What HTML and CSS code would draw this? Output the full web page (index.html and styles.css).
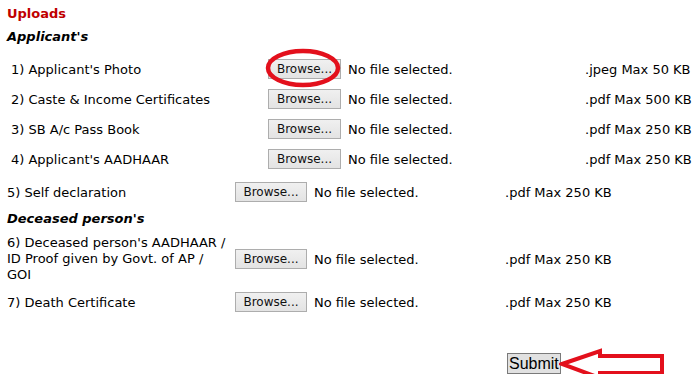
FILE: index.html
```html
<!DOCTYPE html>
<html>
<head>
<meta charset="utf-8">
<link rel="stylesheet" href="styles.css">
</head>
<body>
<div class="page">
  <div class="title">Uploads</div>
  <div class="section">Applicant's</div>
  <div class="group group-a">
    <div class="row">
      <div class="label">1) Applicant's Photo</div>
      <div class="file"><span class="btn-wrap"><span class="btn">Browse...</span><svg class="ring" viewBox="0 0 76 40" width="76" height="40"><ellipse cx="38" cy="20" rx="35" ry="17" fill="none" stroke="#e3101c" stroke-width="4.5"/></svg></span><span class="status">No file selected.</span></div>
      <div class="size">.jpeg Max 50 KB</div>
    </div>
    <div class="row">
      <div class="label">2) Caste &amp; Income Certificates</div>
      <div class="file"><span class="btn">Browse...</span><span class="status">No file selected.</span></div>
      <div class="size">.pdf Max 500 KB</div>
    </div>
    <div class="row">
      <div class="label">3) SB A/c Pass Book</div>
      <div class="file"><span class="btn">Browse...</span><span class="status">No file selected.</span></div>
      <div class="size">.pdf Max 250 KB</div>
    </div>
    <div class="row">
      <div class="label">4) Applicant's AADHAAR</div>
      <div class="file"><span class="btn">Browse...</span><span class="status">No file selected.</span></div>
      <div class="size">.pdf Max 250 KB</div>
    </div>
  </div>
  <div class="group group-b first-b">
    <div class="row">
      <div class="label">5) Self declaration</div>
      <div class="file"><span class="btn">Browse...</span><span class="status">No file selected.</span></div>
      <div class="size">.pdf Max 250 KB</div>
    </div>
  </div>
  <div class="section section2">Deceased person's</div>
  <div class="group group-b">
    <div class="row tall">
      <div class="label">6) Deceased person's AADHAAR /<br>ID Proof given by Govt. of AP /<br>GOI</div>
      <div class="file"><span class="btn">Browse...</span><span class="status">No file selected.</span></div>
      <div class="size">.pdf Max 250 KB</div>
    </div>
    <div class="row">
      <div class="label">7) Death Certificate</div>
      <div class="file"><span class="btn">Browse...</span><span class="status">No file selected.</span></div>
      <div class="size">.pdf Max 250 KB</div>
    </div>
  </div>
  <div class="actions">
    <span class="submit-wrap"><button class="submit">Submit</button><svg class="arrow" viewBox="0 0 112 32" width="112" height="32"><path d="M3 16 L41 3 L41 8 L103 8 L103 25 L41 25 L41 30 Z" fill="#fff" stroke="#e3101c" stroke-width="4" stroke-linejoin="miter"/></svg></span>
  </div>
</div>
</body>
</html>
```
FILE: styles.css
```css
html, body {
  margin: 0;
  padding: 0;
  background: #fff;
}
.page {
  padding: 4px 0 0 7px;
  font-family: "DejaVu Sans", Verdana, sans-serif;
  font-size: 13px;
  color: #000;
}
.title {
  color: #c00000;
  font-weight: bold;
  font-size: 13px;
  line-height: 20px;
}
.section {
  margin-top: 3px;
  font-weight: bold;
  font-style: italic;
  line-height: 20px;
}
.section2 {
  margin-top: 2px;
}
.group-a {
  margin-top: 7px;
  padding-left: 4px;
}
.first-b {
  margin-top: 3px;
}
.row {
  display: flex;
  align-items: center;
  height: 30px;
}
.row.tall {
  height: 48px;
  margin-top: 6px;
  margin-bottom: 4px;
}
.row.tall .label {
  line-height: 16px;
}
.label {
  flex: none;
}
.group-a .label { width: 257px; }
.group-b .label { width: 228px; }
.file {
  flex: none;
  display: flex;
  align-items: center;
}
.group-a .file { width: 317px; }
.group-b .file { width: 270px; }
.btn-wrap {
  position: relative;
  display: inline-flex;
}
.btn {
  display: inline-block;
  box-sizing: border-box;
  width: 73px;
  height: 20px;
  line-height: 18px;
  text-align: center;
  font-size: 12px;
  color: #111;
  background: linear-gradient(#f0f0f0, #e3e3e3);
  border: 1px solid #adadad;
}
.group-b .btn { width: 72px; }
.status {
  margin-left: 7px;
}
.ring {
  position: absolute;
  left: -3px;
  top: -11px;
}
.size {
  flex: none;
}
.actions {
  padding-left: 500px;
  margin-top: 36px;
}
.submit-wrap {
  position: relative;
  display: inline-block;
}
.submit {
  font-family: "Liberation Sans", Arial, sans-serif;
  font-size: 16px;
  height: 21px;
  padding: 0 1px;
  line-height: 19px;
  background: #e1e1e1;
  border: 1px solid #7a7a7a;
  border-radius: 0;
  color: #000;
  margin: 0;
}
.arrow {
  position: absolute;
  left: 52px;
  top: -5px;
}
```
